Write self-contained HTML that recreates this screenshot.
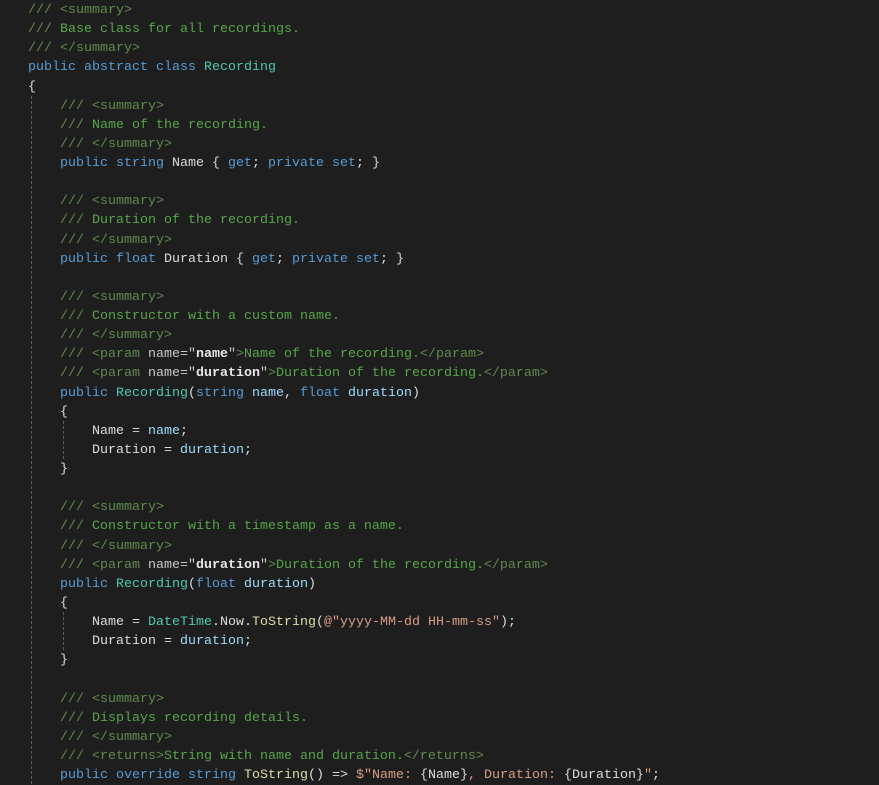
<!DOCTYPE html>
<html><head><meta charset="utf-8"><style>
body{margin:0;background:#1e1e1e;width:879px;height:783px;overflow:hidden;position:relative}
pre{margin:0;position:absolute;left:28px;top:1px;font-family:"Liberation Mono",monospace;font-size:13.33px;line-height:19.125px;color:#dcdcdc}
.c{color:#57a64a}.t{color:#608b4e}.k{color:#569cd6}.y{color:#4ec9b0}.p{color:#9cdcfe}.s{color:#d69d85}.m{color:#dcdcaa}.a{color:#c8c8c8}.w{color:#e8e8e8;font-weight:bold}
.g{position:absolute;width:0;border-left:1px dashed #5a5a5a}
</style></head><body>
<div class="g" style="left:31px;top:96px;height:688px"></div>
<div class="g" style="left:63px;top:421px;height:38px"></div>
<div class="g" style="left:63px;top:612px;height:38px"></div>
<pre><span class="t">/// &lt;summary&gt;</span>
<span class="t">///</span><span class="c"> Base class for all recordings.</span>
<span class="t">/// &lt;/summary&gt;</span>
<span class="k">public abstract class</span> <span class="y">Recording</span>
{
    <span class="t">/// &lt;summary&gt;</span>
    <span class="t">///</span><span class="c"> Name of the recording.</span>
    <span class="t">/// &lt;/summary&gt;</span>
    <span class="k">public string</span> Name { <span class="k">get</span>; <span class="k">private set</span>; }

    <span class="t">/// &lt;summary&gt;</span>
    <span class="t">///</span><span class="c"> Duration of the recording.</span>
    <span class="t">/// &lt;/summary&gt;</span>
    <span class="k">public float</span> Duration { <span class="k">get</span>; <span class="k">private set</span>; }

    <span class="t">/// &lt;summary&gt;</span>
    <span class="t">///</span><span class="c"> Constructor with a custom name.</span>
    <span class="t">/// &lt;/summary&gt;</span>
    <span class="t">/// &lt;param </span><span class="a">name=</span><span class="a">"</span><span class="w">name</span><span class="a">"</span><span class="t">&gt;</span><span class="c">Name of the recording.</span><span class="t">&lt;/param&gt;</span>
    <span class="t">/// &lt;param </span><span class="a">name=</span><span class="a">"</span><span class="w">duration</span><span class="a">"</span><span class="t">&gt;</span><span class="c">Duration of the recording.</span><span class="t">&lt;/param&gt;</span>
    <span class="k">public</span> <span class="y">Recording</span>(<span class="k">string</span> <span class="p">name</span>, <span class="k">float</span> <span class="p">duration</span>)
    {
        Name = <span class="p">name</span>;
        Duration = <span class="p">duration</span>;
    }

    <span class="t">/// &lt;summary&gt;</span>
    <span class="t">///</span><span class="c"> Constructor with a timestamp as a name.</span>
    <span class="t">/// &lt;/summary&gt;</span>
    <span class="t">/// &lt;param </span><span class="a">name=</span><span class="a">"</span><span class="w">duration</span><span class="a">"</span><span class="t">&gt;</span><span class="c">Duration of the recording.</span><span class="t">&lt;/param&gt;</span>
    <span class="k">public</span> <span class="y">Recording</span>(<span class="k">float</span> <span class="p">duration</span>)
    {
        Name = <span class="y">DateTime</span>.Now.<span class="m">ToString</span>(<span class="s">@"yyyy-MM-dd HH-mm-ss"</span>);
        Duration = <span class="p">duration</span>;
    }

    <span class="t">/// &lt;summary&gt;</span>
    <span class="t">///</span><span class="c"> Displays recording details.</span>
    <span class="t">/// &lt;/summary&gt;</span>
    <span class="t">/// &lt;returns&gt;</span><span class="c">String with name and duration.</span><span class="t">&lt;/returns&gt;</span>
    <span class="k">public override string</span> <span class="m">ToString</span>() =&gt; <span class="s">$"Name: </span>{Name}<span class="s">, Duration: </span>{Duration}<span class="s">"</span>;
</pre>
</body></html>
